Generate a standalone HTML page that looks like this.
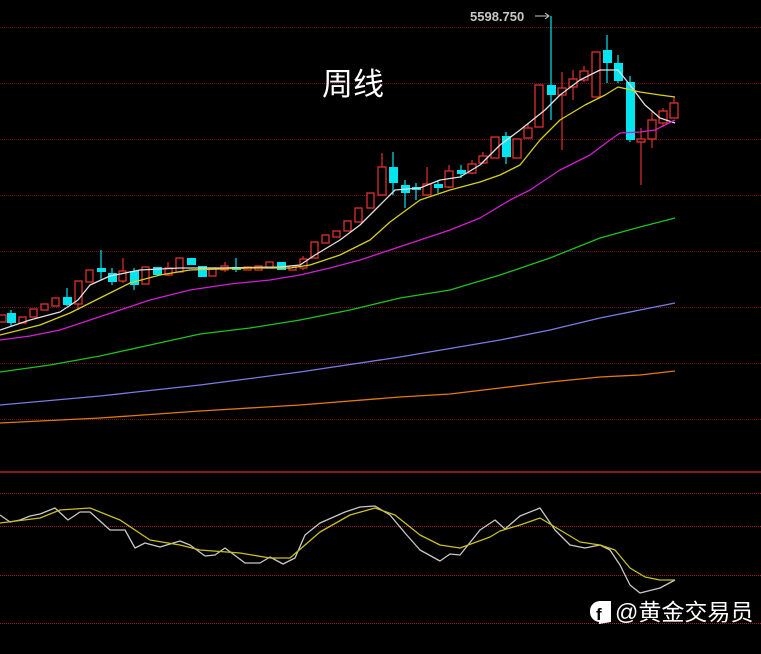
<!DOCTYPE html>
<html><head><meta charset="utf-8"><style>
html,body{margin:0;padding:0;background:#000;width:761px;height:654px;overflow:hidden}
svg{display:block}
</style></head><body>
<svg width="761" height="654" viewBox="0 0 761 654" xmlns="http://www.w3.org/2000/svg">
<rect width="761" height="654" fill="#000"/>
<g stroke="#6a1414" stroke-width="1" stroke-dasharray="1 1">
<line x1="0" y1="27.5" x2="761" y2="27.5"/>
<line x1="0" y1="83.5" x2="761" y2="83.5"/>
<line x1="0" y1="139.5" x2="761" y2="139.5"/>
<line x1="0" y1="195.5" x2="761" y2="195.5"/>
<line x1="0" y1="251.5" x2="761" y2="251.5"/>
<line x1="0" y1="307.5" x2="761" y2="307.5"/>
<line x1="0" y1="363.5" x2="761" y2="363.5"/>
<line x1="0" y1="419.5" x2="761" y2="419.5"/>
</g>
<g stroke="#a02020" stroke-width="1" stroke-dasharray="1 1">
<line x1="0" y1="493.5" x2="761" y2="493.5"/>
<line x1="0" y1="526.5" x2="761" y2="526.5"/>
<line x1="0" y1="575.5" x2="761" y2="575.5"/>
<line x1="0" y1="623.5" x2="761" y2="623.5"/>
</g>
<line x1="0" y1="472" x2="761" y2="472" stroke="#b02020" stroke-width="1.5"/>

<text x="322" y="95" fill="#fff" font-family="Liberation Sans, Noto Sans CJK SC, sans-serif" font-size="31">周线</text>

<g stroke-width="1.2">
<g stroke="#e03030">
<line x1="78" y1="281" x2="78" y2="310"/><line x1="123" y1="258" x2="123" y2="283"/>
<line x1="168" y1="262" x2="168" y2="276"/><line x1="382" y1="153" x2="382" y2="195"/>
<line x1="427" y1="167" x2="427" y2="196"/><line x1="449" y1="165" x2="449" y2="188"/>
<line x1="472" y1="160" x2="472" y2="174"/><line x1="483" y1="152" x2="483" y2="164"/>
<line x1="528" y1="124" x2="528" y2="139"/><line x1="562" y1="72" x2="562" y2="150"/>
<line x1="573" y1="70" x2="573" y2="100"/><line x1="584" y1="66" x2="584" y2="82"/>
<line x1="641" y1="128" x2="641" y2="185"/><line x1="652" y1="110" x2="652" y2="148"/>
<line x1="663" y1="108" x2="663" y2="127"/><line x1="674" y1="97" x2="674" y2="118"/>
<line x1="303" y1="256" x2="303" y2="270"/><line x1="225" y1="262" x2="225" y2="272"/>
</g>
<g stroke="#00e5f0">
<line x1="67" y1="288" x2="67" y2="306"/><line x1="101" y1="250" x2="101" y2="280"/>
<line x1="112" y1="268" x2="112" y2="285"/><line x1="134" y1="268" x2="134" y2="290"/>
<line x1="236" y1="258" x2="236" y2="272"/><line x1="393" y1="152" x2="393" y2="195"/>
<line x1="405" y1="180" x2="405" y2="208"/><line x1="416" y1="183" x2="416" y2="200"/>
<line x1="438" y1="180" x2="438" y2="193"/><line x1="461" y1="165" x2="461" y2="178"/>
<line x1="506" y1="132" x2="506" y2="164"/><line x1="551" y1="16" x2="551" y2="120"/>
<line x1="607" y1="35" x2="607" y2="83"/><line x1="618" y1="55" x2="618" y2="83"/>
<line x1="630" y1="76" x2="630" y2="142"/><line x1="11" y1="310" x2="11" y2="326"/>
</g>
</g>
<g fill="#000" stroke="#e03030" stroke-width="1.3">
<rect x="-1" y="315" width="7" height="7"/><rect x="19" y="317" width="7" height="6"/>
<rect x="30" y="309" width="7" height="8"/><rect x="41" y="304" width="7" height="6"/>
<rect x="52" y="298" width="7" height="8"/><rect x="75" y="281" width="7" height="23"/>
<rect x="86" y="270" width="7" height="12"/><rect x="119" y="271" width="7" height="10"/>
<rect x="142" y="267" width="7" height="17"/><rect x="165" y="268" width="7" height="7"/>
<rect x="176" y="258" width="7" height="14"/><rect x="209" y="268" width="7" height="8"/>
<rect x="221" y="266" width="7" height="4"/><rect x="244" y="267" width="7" height="3"/>
<rect x="255" y="266" width="7" height="4"/><rect x="266" y="262" width="7" height="6"/>
<rect x="289" y="266" width="7" height="4"/><rect x="300" y="259" width="7" height="9"/>
<rect x="311" y="242" width="7" height="16"/><rect x="322" y="235" width="7" height="8"/>
<rect x="333" y="231" width="7" height="6"/><rect x="344" y="221" width="7" height="10"/>
<rect x="355" y="208" width="7" height="14"/><rect x="367" y="193" width="7" height="15"/>
<rect x="378" y="167" width="8" height="28"/><rect x="423" y="184" width="8" height="11"/>
<rect x="445" y="171" width="8" height="16"/><rect x="468" y="164" width="8" height="9"/>
<rect x="479" y="156" width="8" height="7"/><rect x="491" y="137" width="8" height="21"/>
<rect x="513" y="139" width="8" height="19"/><rect x="524" y="128" width="8" height="10"/>
<rect x="535" y="85" width="8" height="42"/><rect x="558" y="88" width="8" height="7"/>
<rect x="569" y="79" width="8" height="8"/><rect x="580" y="71" width="8" height="9"/>
<rect x="592" y="52" width="8" height="45"/><rect x="637" y="139" width="8" height="3"/>
<rect x="648" y="120" width="8" height="19"/><rect x="659" y="111" width="8" height="12"/>
<rect x="670" y="103" width="8" height="15"/>
</g>
<g fill="#00e5f0">
<rect x="7" y="313" width="9" height="10"/><rect x="63" y="297" width="9" height="8"/>
<rect x="97" y="268" width="9" height="4"/><rect x="108" y="273" width="9" height="9"/>
<rect x="130" y="271" width="9" height="14"/><rect x="153" y="267" width="9" height="8"/>
<rect x="187" y="258" width="9" height="7"/><rect x="198" y="266" width="9" height="11"/>
<rect x="232" y="267" width="9" height="3"/><rect x="277" y="262" width="9" height="8"/>
<rect x="389" y="167" width="9" height="16"/><rect x="401" y="185" width="9" height="8"/>
<rect x="412" y="187" width="9" height="3"/><rect x="434" y="184" width="9" height="4"/>
<rect x="457" y="170" width="9" height="4"/><rect x="502" y="136" width="9" height="21"/>
<rect x="547" y="85" width="9" height="10"/><rect x="603" y="50" width="9" height="13"/>
<rect x="614" y="63" width="9" height="18"/><rect x="626" y="82" width="9" height="58"/>
</g>

<g fill="none" stroke-width="1.3" stroke-linejoin="round">
<polyline stroke="#e0e0e0" points="0,330 30,320 60,312 78,300 90,285 110,276 140,270 180,268 220,268 280,267 300,265 315,255 340,240 360,225 380,205 395,190 420,188 440,180 460,177 480,165 500,145 520,130 545,110 560,95 580,80 600,70 618,70 630,85 645,105 660,118 675,123"/>
<polyline stroke="#d8d020" points="0,335 40,325 70,313 100,298 130,283 160,275 190,270 250,268 290,268 310,265 340,255 370,240 390,222 420,200 450,190 480,182 500,175 520,165 540,140 560,120 585,105 605,95 618,87 640,92 660,95 675,97"/>
<polyline stroke="#d020d0" points="0,340 30,336 60,330 90,320 120,310 150,300 190,290 230,284 270,280 300,275 330,268 360,260 390,250 420,240 450,230 480,218 510,200 530,190 560,170 590,155 610,140 620,133 640,132 655,130 675,120"/>
<polyline stroke="#20c020" points="0,372 50,365 100,356 150,345 200,334 250,328 300,320 350,310 400,298 450,290 500,275 550,258 600,238 640,227 675,218"/>
<polyline stroke="#7a7ae0" points="0,405 100,396 200,385 300,372 400,357 500,340 550,330 600,318 640,310 675,303"/>
<polyline stroke="#e07a10" points="0,423 100,418 200,411 300,405 400,397 450,394 500,388 550,382 600,377 640,375 675,371"/>
</g>

<text x="470" y="21" fill="#c8c8c8" font-family="Liberation Sans, sans-serif" font-size="13" font-weight="bold">5598.750</text>
<line x1="535" y1="16" x2="549" y2="16" stroke="#c8c8c8" stroke-width="1"/>
<path d="M545,13 L549,16 L545,19" fill="none" stroke="#c8c8c8" stroke-width="1"/>

<g fill="none" stroke-width="1.3" stroke-linejoin="round">
<polyline stroke="#c8c8c8" points="0,515 10,522 20,520 30,516 40,514 55,508 68,520 80,512 90,512 110,530 125,530 135,548 145,543 160,547 180,541 190,545 205,556 215,555 225,548 245,563 260,563 270,557 283,564 295,558 305,535 320,523 345,512 360,507 375,506 390,515 405,533 420,550 440,561 450,554 460,555 480,530 495,520 505,529 520,516 540,508 555,530 570,545 585,548 600,545 610,550 620,565 630,585 640,593 660,588 675,580"/>
<polyline stroke="#c8c020" points="0,523 40,518 60,510 90,508 120,520 150,540 180,545 200,550 240,553 270,558 290,558 320,532 350,515 375,508 395,515 420,535 440,545 460,548 490,537 500,531 520,525 540,518 560,530 580,542 600,545 615,550 630,568 645,577 660,580 675,580"/>
</g>

<rect x="590" y="601" width="21" height="21" rx="10" fill="#fff"/>
<path d="M599,624 L599,601 L611,601 L611,622 Z" fill="#fff"/>
<text x="596" y="620" fill="#000" font-family="Liberation Sans, sans-serif" font-size="17" font-weight="bold">f</text>
<text x="615" y="620" fill="#fff" font-family="Liberation Sans, Noto Sans CJK SC, sans-serif" font-size="23">@黄金交易员</text>
</svg>
</body></html>
